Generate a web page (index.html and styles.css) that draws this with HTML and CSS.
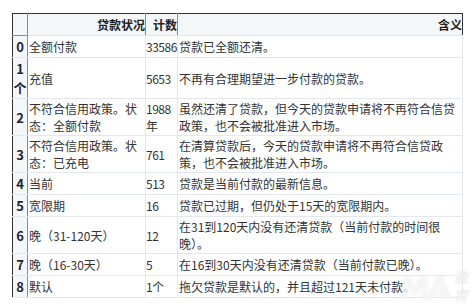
FILE: index.html
```html
<!DOCTYPE html>
<html lang="zh">
<head>
<meta charset="utf-8">
<title>贷款状况</title>
<link rel="stylesheet" href="styles.css">
</head>
<body>
<div class="wrap">
<table class="grid">
  <colgroup>
    <col class="c-idx">
    <col class="c-status">
    <col class="c-count">
    <col class="c-desc">
  </colgroup>
  <thead>
    <tr>
      <th class="idx"></th>
      <th>贷款状况</th>
      <th>计数</th>
      <th class="last">含义</th>
    </tr>
  </thead>
  <tbody>
    <tr><th class="idx">0</th><td>全额付款</td><td class="num">33586</td><td>贷款已全额还清。</td></tr>
    <tr><th class="idx">1个</th><td>充值</td><td class="num">5653</td><td>不再有合理期望进一步付款的贷款。</td></tr>
    <tr><th class="idx">2</th><td>不符合信用政策。状态：全额付款</td><td class="num">1988年</td><td>虽然还清了贷款，但今天的贷款申请将不再符合信贷政策，也不会被批准进入市场。</td></tr>
    <tr><th class="idx">3</th><td>不符合信用政策。状态：已充电</td><td class="num">761</td><td>在清算贷款后，今天的贷款申请将不再符合信贷政策，也不会被批准进入市场。</td></tr>
    <tr><th class="idx">4</th><td>当前</td><td class="num">513</td><td>贷款是当前付款的最新信息。</td></tr>
    <tr><th class="idx">5</th><td>宽限期</td><td class="num">16</td><td>贷款已过期，但仍处于15天的宽限期内。</td></tr>
    <tr><th class="idx">6</th><td>晚（31-120天）</td><td class="num">12</td><td>在31到120天内没有还清贷款（当前付款的时间很晚）。</td></tr>
    <tr><th class="idx">7</th><td>晚（16-30天）</td><td class="num">5</td><td>在16到30天内没有还清贷款（当前付款已晚）。</td></tr>
    <tr><th class="idx">8</th><td>默认</td><td class="num">1个</td><td>拖欠贷款是默认的，并且超过121天未付款。</td></tr>
  </tbody>
</table>
<div class="mark"><span class="mark-ma">MA</span><span class="mark-cn">教育</span></div>
</div>
</body>
</html>
```
FILE: styles.css
```css
html, body {
  margin: 0;
  padding: 0;
  background: #ffffff;
}
body {
  font-family: "Noto Sans CJK SC", "Noto Sans", sans-serif;
  font-size: 12px;
  color: #333333;
}
.wrap {
  position: relative;
  padding: 13px 0 0 12px;
  width: 462px;
  height: 295px;
}
.grid {
  border-collapse: collapse;
  table-layout: fixed;
  width: 450px;
  border-left: 1px solid #333333;
  border-top: 1px solid #333333;
}
.c-idx { width: 15px; }
.c-status { width: 118px; }
.c-count { width: 32px; }
.c-desc { width: 285px; }

.grid tr { height: 22px; }
.grid th, .grid td {
  padding: 1px 1px 1px 1px;
  line-height: 17px;
  vertical-align: middle;
}
.grid thead th {
  background: #f4f7fa;
  font-weight: bold;
  text-align: right;
  color: #222222;
  border-right: 1px solid #8c8c8c;
  border-bottom: 1px solid #dfe5ec;
  white-space: nowrap;
  padding-right: 0;
  overflow: hidden;
}
.grid thead th.last {
  border-right: 1px solid #333333;
}
.grid thead th.idx {
  border-bottom: 1px solid #8c8c8c;
}
.grid tbody td {
  border-right: 1px solid #e3e8ee;
  border-bottom: 1px solid #e3e8ee;
  text-align: left;
  word-break: break-all;
}
.grid tbody td.num {
  word-break: normal;
  letter-spacing: -0.5px;
  padding-left: 0;
  padding-right: 0;
}
.grid tbody th.idx {
  background: #f4f7fa;
  font-weight: bold;
  font-size: 13px;
  line-height: 19px;
  color: #1d2433;
  text-align: center;
  padding: 1px 0;
  border-right: 1px solid #8c8c8c;
  border-bottom: 1px solid #e3e8ee;
}
.mark {
  position: absolute;
  left: 400px;
  top: 268px;
  display: flex;
  align-items: flex-end;
  gap: 5px;
  pointer-events: none;
}
.mark-ma {
  font-family: "DejaVu Sans", sans-serif;
  font-weight: bold;
  font-size: 30px;
  line-height: 30px;
  color: rgba(255, 255, 255, 0.7);
  text-shadow: 0 0 2px rgba(160, 160, 160, 0.3);
  letter-spacing: -2px;
}
.mark-cn {
  font-size: 14px;
  line-height: 18px;
  font-style: italic;
  color: rgba(255, 255, 255, 0.85);
  text-shadow: 0 0 1px rgba(130, 130, 130, 0.45);
}
```
